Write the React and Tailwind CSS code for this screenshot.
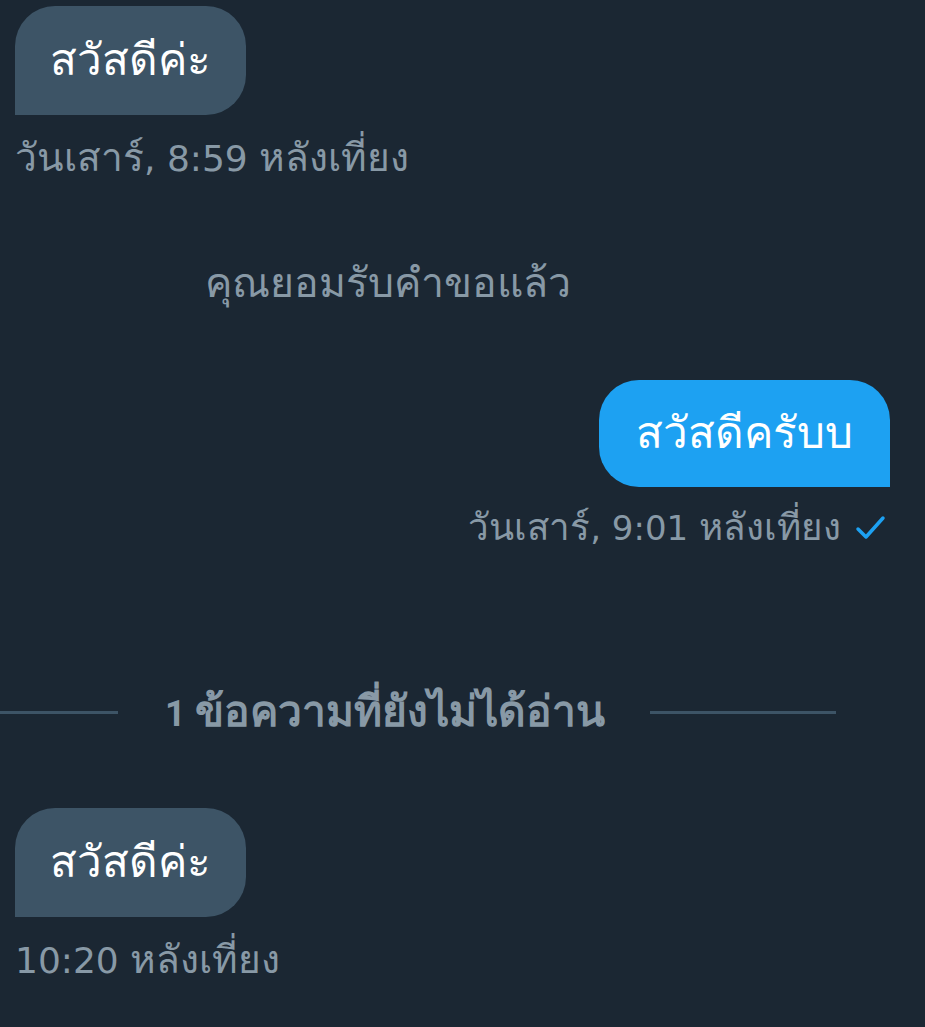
import React from 'react';

const font = { fontFamily: '"Roboto", "Noto Sans", sans-serif' };
const stamp = { fontFamily: '"DejaVu Sans", "Noto Sans", sans-serif' };

// Thai glyphs come out small next to the digits, so they get their own size
const T = ({ children }) => <span className="text-[1.08em]">{children}</span>;

const Received = ({ text, time }) => (
  <div className="flex flex-col items-start pl-[15px]">
    <div className="h-[109px] flex items-center px-[35px] pb-[2px] bg-[#3d5466] text-white text-[44px] leading-none rounded-[40px] rounded-bl-none">
      {text}
    </div>
    <div className="mt-[21px] h-[44px] flex items-center text-[36px] leading-none text-[#8899a6] whitespace-nowrap" style={stamp}>
      {time}
    </div>
  </div>
);

const App = () => {
  return (
    <div className="w-[925px] h-[1027px] bg-[#1b2733] overflow-hidden pt-[6px]" style={font}>
      <Received
        text="สวัสดีค่ะ"
        time={<span><T>วันเสาร์</T>, 8:59 <T>หลังเที่ยง</T></span>}
      />

      <div className="mt-[81px] h-[44px] flex items-center pl-[205px] text-[41px] leading-none text-[#8899a6]">
        คุณยอมรับคำขอแล้ว
      </div>

      <div className="mt-[75px] flex flex-col items-end pr-[35px]">
        <div className="h-[107px] flex items-center px-[37px] pb-[2px] bg-[#1da1f2] text-white text-[44px] leading-none rounded-[40px] rounded-br-none">
          สวัสดีครับบ
        </div>
        <div className="mt-[19px] h-[44px] flex items-center gap-[14px] text-[34px] leading-none text-[#8899a6] whitespace-nowrap" style={stamp}>
          <span><T>วันเสาร์</T>, 9:01 <T>หลังเที่ยง</T></span>
          <svg width="32" height="26" viewBox="0 0 32 26" fill="none" className="mr-[3px]">
            <path d="M3 14 L11 22 L28 3" stroke="#1da1f2" strokeWidth="3.5" strokeLinecap="round" strokeLinejoin="round" />
          </svg>
        </div>
      </div>

      <div className="mt-[140px] w-[836px] h-[44px] flex items-center">
        <div className="w-[118px] h-[3px] bg-[#3d5466]" />
        <div className="ml-[47px] text-[36px] leading-none font-bold text-[#8899a6] whitespace-nowrap">
          1 <span className="text-[42.5px]">ข้อความที่ยังไม่ได้อ่าน</span>
        </div>
        <div className="ml-[45px] flex-1 h-[3px] bg-[#3d5466]" />
      </div>

      <div className="mt-[74px]">
        <Received text="สวัสดีค่ะ" time={<span>10:20 <T>หลังเที่ยง</T></span>} />
      </div>
    </div>
  );
};

export default App;
